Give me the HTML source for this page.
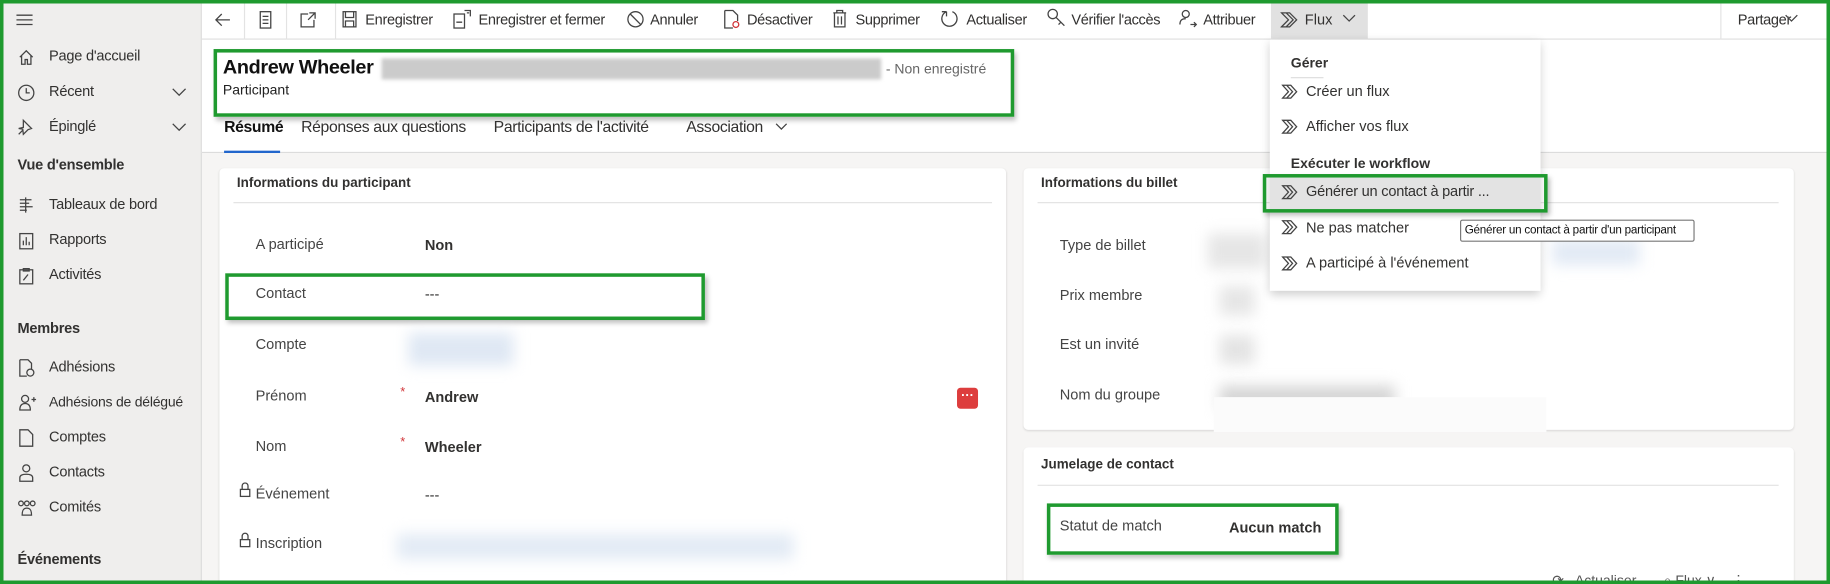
<!DOCTYPE html>
<html><head><meta charset="utf-8"><style>
*{box-sizing:border-box;margin:0;padding:0}
html,body{width:1830px;height:584px;overflow:hidden;background:#fff}
#w{position:absolute;left:0;top:0;width:1568px;height:500px;transform:scale(1.16709,1.168);transform-origin:0 0;font-family:"Liberation Sans",sans-serif;color:#323130;font-size:12.5px;background:#f6f5f4;overflow:hidden}
.a{position:absolute;white-space:nowrap}
.sb{position:absolute;left:0;top:0;width:173px;height:500px;background:#efeeed;border-right:1px solid #dcdcdc}
.tb{position:absolute;left:173px;top:0;width:1395px;height:34px;background:#fff;border-bottom:1px solid #dcdcdc}
.hd{position:absolute;left:173px;top:34px;width:1395px;height:97px;background:#fff;border-bottom:1px solid #dcdcdc}
.card{position:absolute;background:#fff;border-radius:4px;box-shadow:0 1px 2px rgba(0,0,0,.12)}
.g{position:absolute;border:3px solid #1f9a2f;box-shadow:2px 3px 4px rgba(0,0,0,.25)}
.b{font-weight:bold}
.bl{position:absolute;filter:blur(6px)}
svg{position:absolute;fill:none;stroke:#444;stroke-width:1.1}
.lbl{color:#444}
.sbt{font-size:12.5px;letter-spacing:-.2px}
</style></head><body><div id="w">
<div class="sb"></div>
<svg style="left:14px;top:12px" width="14" height="10"><path d="M0 1h14M0 5h14M0 9h14"/></svg>
<svg style="left:16px;top:42px" width="13" height="14"><path d="M1 7L6.5 1.5 12 7M2.5 5.5V13h3V9h2v4h3V5.5"/></svg>
<div class="a sbt" style="left:42px;top:41px">Page d'accueil</div>
<svg style="left:15px;top:72px" width="15" height="15"><circle cx="7.5" cy="7.5" r="6.5"/><path d="M7.5 3.5v4h3"/></svg>
<div class="a sbt" style="left:42px;top:71px">Récent</div>
<svg style="left:147px;top:75px" width="13" height="8"><path d="M1 1l5.5 5.5L12 1"/></svg>
<svg style="left:15px;top:101px" width="14" height="15"><path d="M5 2l7 7-3 1-4 4-.5-4.5L1 9l4-1z M1 14l3.5-3.5"/></svg>
<div class="a sbt" style="left:42px;top:101px">Épinglé</div>
<svg style="left:147px;top:105px" width="13" height="8"><path d="M1 1l5.5 5.5L12 1"/></svg>
<div class="a b sbt" style="left:15px;top:134px">Vue d'ensemble</div>
<svg style="left:16px;top:168px" width="13" height="15"><path d="M6 1v13M1 3h10M1 6h8M1 9h11M1 12h6"/></svg>
<div class="a sbt" style="left:42px;top:168px">Tableaux de bord</div>
<svg style="left:16px;top:199px" width="13" height="15"><rect x="1" y="1" width="11" height="13"/><path d="M4 11V7M6.5 11V4M9 11V8"/></svg>
<div class="a sbt" style="left:42px;top:198px">Rapports</div>
<svg style="left:16px;top:229px" width="13" height="15"><rect x="1" y="2" width="11" height="12"/><path d="M4 1h5v2H4zM4 11l4-5"/></svg>
<div class="a sbt" style="left:42px;top:228px">Activités</div>
<div class="a b sbt" style="left:15px;top:274px">Membres</div>
<svg style="left:16px;top:307px" width="14" height="16"><path d="M1 1h7l3 3v5M1 1v14h6"/><circle cx="10" cy="12" r="3"/></svg>
<div class="a sbt" style="left:42px;top:307px">Adhésions</div>
<svg style="left:16px;top:337px" width="15" height="15"><circle cx="5.5" cy="4.5" r="3"/><path d="M1 14c0-4 2-5.5 4.5-5.5S10 10 10 14zM11 5h4M13 3v4"/></svg>
<div class="a sbt" style="left:42px;top:337px;font-size:12px">Adhésions de délégué</div>
<svg style="left:16px;top:367px" width="13" height="16"><path d="M1 1h7l4 4v10H1z"/></svg>
<div class="a sbt" style="left:42px;top:367px">Comptes</div>
<svg style="left:16px;top:397px" width="13" height="16"><circle cx="6.5" cy="4" r="3"/><path d="M1 15v-3c0-2 2-3 5.5-3s5.5 1 5.5 3v3z"/></svg>
<div class="a sbt" style="left:42px;top:397px">Contacts</div>
<svg style="left:15px;top:428px" width="16" height="14"><circle cx="3" cy="3" r="2"/><circle cx="8" cy="3" r="2"/><circle cx="13" cy="3" r="2"/><path d="M4 13c0-4 1-6 4-6s4 2 4 6z"/></svg>
<div class="a sbt" style="left:42px;top:427px">Comités</div>
<div class="a b sbt" style="left:15px;top:472px">Événements</div>

<div class="tb"></div>
<div class="a" style="left:209px;top:0;width:1px;height:34px;background:#e3e3e3"></div>
<div class="a" style="left:245px;top:0;width:1px;height:34px;background:#e3e3e3"></div>
<div class="a" style="left:287px;top:0;width:1px;height:34px;background:#e3e3e3"></div>
<svg style="left:184px;top:10px" width="14" height="14"><path d="M13 7H1M6 2L1 7l5 5"/></svg>
<svg style="left:222px;top:9px" width="11" height="16"><rect x="1" y="1" width="9" height="14"/><path d="M3 5h5M3 8h5M3 11h5"/></svg>
<svg style="left:257px;top:10px" width="14" height="14"><path d="M7 2H1v11h11V7M8 1h5v5M13 1L7 7"/></svg>
<svg style="left:293px;top:9px" width="13" height="15"><rect x="1" y="1" width="11" height="13"/><path d="M3 1v5h7V1M3 14V9h7v5"/></svg>
<div class="a" style="left:313px;top:10px;letter-spacing:-.3px">Enregistrer</div>
<svg style="left:388px;top:7px" width="16" height="18"><rect x="1" y="5" width="9" height="12"/><path d="M3 12h5M10 2h5v5M12 4l2 0"/></svg>
<div class="a" style="left:410px;top:10px;letter-spacing:-.3px">Enregistrer et fermer</div>
<svg style="left:537px;top:9px" width="15" height="15"><circle cx="7.5" cy="7.5" r="6.5"/><path d="M3 3l9 9"/></svg>
<div class="a" style="left:557px;top:10px;letter-spacing:-.3px">Annuler</div>
<svg style="left:620px;top:8px" width="14" height="17"><path d="M1 1h7l4 4v5M1 1v15h7"/><circle cx="10.5" cy="13" r="2.5" stroke="#d13438"/></svg>
<div class="a" style="left:640px;top:10px;letter-spacing:-.3px">Désactiver</div>
<svg style="left:713px;top:8px" width="13" height="16"><path d="M1 3h11M4 3V1h5v2M2 3v12h9V3M5 6v7M8 6v7"/></svg>
<div class="a" style="left:733px;top:10px;letter-spacing:-.3px">Supprimer</div>
<svg style="left:806px;top:8px" width="15" height="16"><path d="M5 2A6.5 6.5 0 1 0 10 2M5 2v4M5 2H1"/></svg>
<div class="a" style="left:828px;top:10px;letter-spacing:-.3px">Actualiser</div>
<svg style="left:897px;top:7px" width="16" height="17"><circle cx="5" cy="5" r="4"/><path d="M8 8l7 7M12 12l-2 2"/></svg>
<div class="a" style="left:918px;top:10px;letter-spacing:-.3px">Vérifier l'accès</div>
<svg style="left:1010px;top:8px" width="16" height="16"><circle cx="6" cy="4" r="3"/><path d="M1 13c0-4 2-5 5-5M10 13h5M13 11l2 2-2 2"/></svg>
<div class="a" style="left:1031px;top:10px;letter-spacing:-.3px">Attribuer</div>
<div class="a" style="left:1089px;top:3px;width:83px;height:31px;background:#e1e1e1"></div>
<svg style="left:1097px;top:10px" width="16" height="14"><path d="M1 1h7l6 6-6 6H1l6-6zM5 1l6 6-6 6"/></svg>
<div class="a" style="left:1118px;top:10px">Flux</div>
<svg style="left:1150px;top:12px" width="12" height="8"><path d="M1 1l5 5 5-5"/></svg>
<div class="a" style="left:1474px;top:3px;width:1px;height:31px;background:#e3e3e3"></div>
<div class="a" style="left:1489px;top:10px;letter-spacing:-.3px">Partager</div>
<svg style="left:1529px;top:12px" width="12" height="8"><path d="M1 1l5 5 5-5"/></svg>

<div class="hd"></div>
<div class="a b" style="left:191px;top:48px;font-size:17px;color:#111;letter-spacing:-.3px">Andrew Wheeler</div>
<div class="a" style="left:327px;top:50px;width:428px;height:18px;background:#cbcbcb;filter:blur(1.5px)"></div>
<div class="a" style="left:759px;top:52px;color:#666;font-size:12px">- Non enregistré</div>
<div class="a" style="left:191px;top:70px;font-size:12px;color:#222">Participant</div>
<div class="g" style="left:183px;top:42px;width:686px;height:58px"></div>
<div class="a b" style="left:192px;top:101px;font-size:13.5px;color:#111;letter-spacing:-.3px">Résumé</div>
<div class="a" style="left:192px;top:129px;width:48px;height:2px;background:#2266cc"></div>
<div class="a" style="left:258px;top:101px;font-size:13.5px;letter-spacing:-.3px">Réponses aux questions</div>
<div class="a" style="left:423px;top:101px;font-size:13.5px;letter-spacing:-.3px">Participants de l'activité</div>
<div class="a" style="left:588px;top:101px;font-size:13.5px;letter-spacing:-.3px">Association</div>
<svg style="left:664px;top:105px" width="11" height="7"><path d="M1 1l4.5 4.5L10 1"/></svg>

<div class="card" style="left:188px;top:144px;width:674px;height:370px"></div>
<div class="a b" style="left:203px;top:151px;font-size:11.5px">Informations du participant</div>
<div class="a" style="left:200px;top:173px;width:650px;height:1px;background:#e3e3e3"></div>
<div class="a lbl" style="left:219px;top:202px">A participé</div><div class="a b" style="left:364px;top:203px">Non</div>
<div class="a lbl" style="left:219px;top:244px">Contact</div><div class="a" style="left:364px;top:245px">---</div>
<div class="g" style="left:193px;top:234px;width:411px;height:40px"></div>
<div class="a lbl" style="left:219px;top:288px">Compte</div>
<div class="bl" style="left:350px;top:285px;width:90px;height:28px;background:#dfe8f4"></div>
<div class="a lbl" style="left:219px;top:332px">Prénom</div><div class="a" style="left:343px;top:330px;color:#d13438;font-size:11px">*</div><div class="a b" style="left:364px;top:333px">Andrew</div>
<div class="a" style="left:820px;top:332px;width:18px;height:18px;background:#dd3d3d;border-radius:3px;color:#fff;font-size:11px;line-height:14px;text-align:center;font-weight:bold">···</div>
<div class="a lbl" style="left:219px;top:375px">Nom</div><div class="a" style="left:343px;top:373px;color:#d13438;font-size:11px">*</div><div class="a b" style="left:364px;top:376px">Wheeler</div>
<svg style="left:205px;top:413px" width="10" height="13"><rect x="1" y="6" width="8" height="6"/><path d="M2.5 6V3a2.5 2.5 0 0 1 5 0v3"/></svg>
<div class="a lbl" style="left:219px;top:416px">Événement</div><div class="a" style="left:364px;top:417px">---</div>
<svg style="left:205px;top:456px" width="10" height="13"><rect x="1" y="6" width="8" height="6"/><path d="M2.5 6V3a2.5 2.5 0 0 1 5 0v3"/></svg>
<div class="a lbl" style="left:219px;top:458px">Inscription</div>
<div class="bl" style="left:340px;top:457px;width:340px;height:22px;background:#e3ebf5"></div>

<div class="card" style="left:877px;top:144px;width:660px;height:224px"></div>
<div class="a b" style="left:892px;top:151px;font-size:11.5px">Informations du billet</div>
<div class="a" style="left:889px;top:173px;width:635px;height:1px;background:#e3e3e3"></div>
<div class="a lbl" style="left:908px;top:203px">Type de billet</div>
<div class="bl" style="left:1035px;top:200px;width:50px;height:30px;background:#e6e6e6"></div>
<div class="bl" style="left:1330px;top:205px;width:75px;height:22px;background:#e2eaf5"></div>
<div class="a lbl" style="left:908px;top:246px">Prix membre</div>
<div class="bl" style="left:1045px;top:245px;width:30px;height:25px;background:#e6e6e6"></div>
<div class="a lbl" style="left:908px;top:288px">Est un invité</div>
<div class="bl" style="left:1045px;top:287px;width:30px;height:25px;background:#e4e4e4"></div>
<div class="a lbl" style="left:908px;top:331px">Nom du groupe</div>
<div class="bl" style="left:1045px;top:330px;width:150px;height:22px;background:#d6d6d6"></div>
<div class="a" style="left:1040px;top:340px;width:285px;height:30px;background:#fbfbfb"></div>

<div class="card" style="left:877px;top:383px;width:660px;height:130px"></div>
<div class="a b" style="left:892px;top:392px;font-size:11.5px">Jumelage de contact</div>
<div class="a" style="left:889px;top:415px;width:635px;height:1px;background:#e3e3e3"></div>
<div class="a lbl" style="left:908px;top:443px">Statut de match</div>
<div class="a b" style="left:1053px;top:445px">Aucun match</div>
<div class="g" style="left:897px;top:431px;width:250px;height:44px"></div>
<div class="a" style="left:1330px;top:490px;font-size:12px;color:#555">⟳&nbsp;&nbsp; Actualiser &nbsp;&nbsp;&nbsp;&nbsp;&nbsp; ⌕ Flux ∨ &nbsp;&nbsp; ⋮</div>

<div class="a" style="left:1088px;top:34px;width:232px;height:215px;background:#fff;box-shadow:0 3px 8px rgba(0,0,0,.2)"></div>
<div class="a b" style="left:1106px;top:47px;font-size:12px">Gérer</div>
<div class="a" style="left:1106px;top:66px;width:28px;height:1px;background:#ddd"></div>
<svg style="left:1098px;top:72px" width="16" height="13"><path d="M1 1h7l5 5.5-5 5.5H1l5-5.5zM4.5 1l5 5.5-5 5.5"/></svg>
<div class="a" style="left:1119px;top:71px">Créer un flux</div>
<svg style="left:1098px;top:102px" width="16" height="13"><path d="M1 1h7l5 5.5-5 5.5H1l5-5.5zM4.5 1l5 5.5-5 5.5"/></svg>
<div class="a" style="left:1119px;top:101px">Afficher vos flux</div>
<div class="a b" style="left:1106px;top:133px;font-size:12px">Exécuter le workflow</div>
<div class="a" style="left:1088px;top:150px;width:232px;height:31px;background:#e3e3e3"></div>
<svg style="left:1098px;top:158px" width="16" height="13"><path d="M1 1h7l5 5.5-5 5.5H1l5-5.5zM4.5 1l5 5.5-5 5.5"/></svg>
<div class="a" style="left:1119px;top:157px;letter-spacing:-.2px">Générer un contact à partir ...</div>
<div class="g" style="left:1082px;top:149px;width:244px;height:33px"></div>
<svg style="left:1098px;top:188px" width="16" height="13"><path d="M1 1h7l5 5.5-5 5.5H1l5-5.5zM4.5 1l5 5.5-5 5.5"/></svg>
<div class="a" style="left:1119px;top:188px">Ne pas matcher</div>
<svg style="left:1098px;top:219px" width="16" height="13"><path d="M1 1h7l5 5.5-5 5.5H1l5-5.5zM4.5 1l5 5.5-5 5.5"/></svg>
<div class="a" style="left:1119px;top:218px">A participé à l'événement</div>
<div class="a" style="left:1251px;top:188px;width:201px;height:19px;background:#fff;border:1px solid #777;border-radius:2px;font-size:10px;line-height:17px;padding-left:3px;color:#111;letter-spacing:-.2px;overflow:hidden">Générer un contact à partir d'un participant</div>

<div class="a" style="left:0;top:0;width:1568px;height:500px;border:3px solid #1f9a2f"></div>
</div></body></html>
